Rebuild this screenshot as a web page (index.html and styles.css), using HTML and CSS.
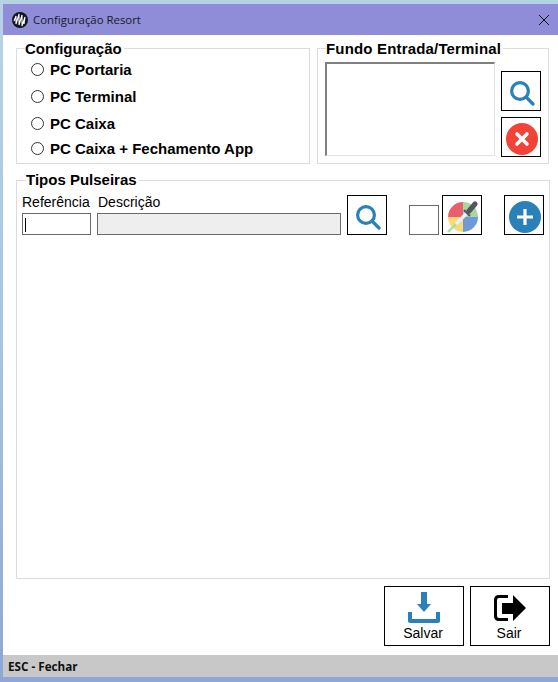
FILE: index.html
```html
<!DOCTYPE html>
<html lang="pt">
<head>
    <meta charset="UTF-8">
    <title>Configuração Resort</title>
    <link rel="stylesheet" href="styles.css">
</head>
<body>
<div class="window">
    <div class="titlebar">
        <svg class="logo" width="16" height="16" viewBox="0 0 16 16">
            <circle cx="8" cy="8" r="8" fill="#15151f"/>
            <path d="M2 9 4 4 4 12 7 2 7 13 10 3 10 14 13 5 12 12" fill="none" stroke="#fff" stroke-width="1.1"/>
        </svg>
        <span class="title">Configuração Resort</span>
        <svg class="close" width="10" height="10" viewBox="0 0 10 10">
            <path d="M0 0 10 10M10 0 0 10" stroke="#111" stroke-width="1" fill="none"/>
        </svg>
    </div>

    <div class="main">
        <div class="top-row">
            <fieldset class="group config">
                <legend>Configuração</legend>
                <label class="radio r1"><input type="radio" name="pc"> PC Portaria</label>
                <label class="radio r2"><input type="radio" name="pc"> PC Terminal</label>
                <label class="radio r3"><input type="radio" name="pc"> PC Caixa</label>
                <label class="radio r4"><input type="radio" name="pc"> PC Caixa + Fechamento App</label>
            </fieldset>

            <fieldset class="group fundo">
                <legend>Fundo Entrada/Terminal</legend>
                <div class="fundo-body">
                    <div class="picture"></div>
                    <div class="fundo-btns">
                        <button class="icon-btn" type="button">
                            <svg width="25" height="25" viewBox="0 0 25 25"><circle cx="10" cy="10" r="8.4" fill="none" stroke="#2a80b9" stroke-width="3.2"/><path d="M16.5 16.5 23 23" stroke="#2a80b9" stroke-width="3.2" stroke-linecap="round"/></svg>
                        </button>
                        <button class="icon-btn" type="button">
                            <svg width="32" height="32" viewBox="0 0 32 32"><circle cx="16" cy="16" r="16" fill="#f44336"/><path d="M11 11 21 21M21 11 11 21" stroke="#fff" stroke-width="3.6" stroke-linecap="round"/></svg>
                        </button>
                    </div>
                </div>
            </fieldset>
        </div>

        <fieldset class="group tipos">
            <legend>Tipos Pulseiras</legend>
            <div class="tipos-row">
                <div class="field">
                    <label class="field-label" for="ref">Referência</label>
                    <input id="ref" class="text ref">
                    <span class="caret"></span>
                </div>
                <div class="field">
                    <label class="field-label desc-label" for="desc">Descrição</label>
                    <input id="desc" class="text desc" disabled>
                </div>
                <button class="icon-btn search" type="button">
                    <svg width="25" height="25" viewBox="0 0 25 25"><circle cx="10" cy="10" r="8.4" fill="none" stroke="#2a80b9" stroke-width="3.2"/><path d="M16.5 16.5 23 23" stroke="#2a80b9" stroke-width="3.2" stroke-linecap="round"/></svg>
                </button>
                <div class="swatch"></div>
                <button class="icon-btn picker" type="button">
                    <svg width="32" height="32" viewBox="0 0 32 32">
                        <path d="M16 16V1A15 15 0 0 0 1 16Z" fill="#ea5f6e"/>
                        <path d="M16 16V1A15 15 0 0 1 31 16Z" fill="#a5d9a0"/>
                        <path d="M16 16H1A15 15 0 0 0 16 31Z" fill="#fbd977"/>
                        <path d="M16 16H31A15 15 0 0 1 16 31Z" fill="#6e9bd8"/>
                        <path d="M1 31 11 21" stroke="#a5e0a8" stroke-width="2.4"/>
                        <path d="M9 23 20 12" stroke="#e8f0f8" stroke-width="3.4"/>
                        <path d="M17 9 23 15" stroke="#555560" stroke-width="2"/>
                        <path d="M22 10 28 3" stroke="#555560" stroke-width="5" stroke-linecap="round"/>
                    </svg>
                </button>
                <button class="icon-btn plus" type="button">
                    <svg width="32" height="32" viewBox="0 0 32 32"><circle cx="16" cy="16" r="16" fill="#2a80b9"/><path d="M16 8V24M8 16H24" stroke="#fff" stroke-width="3.2"/></svg>
                </button>
            </div>
        </fieldset>

        <div class="actions">
            <button class="action-btn" type="button">
                <svg width="32" height="32" viewBox="0 0 32 32"><path d="M13 0H19V12H23L16 20 9 12H13Z" fill="#2a80b9"/><path d="M2 20V29H30V20" fill="none" stroke="#2a80b9" stroke-width="4" stroke-linejoin="round"/></svg>
                <span>Salvar</span>
            </button>
            <button class="action-btn" type="button">
                <svg width="32" height="32" viewBox="0 0 32 32"><path d="M14 4.500H5Q1.500 4.500 1.500 8V24Q1.500 27.500 5 27.500H14" fill="none" stroke="#000" stroke-width="3"/><path d="M8 11H19V3L32 16 19 29V22H8Z" fill="#000"/></svg>
                <span>Sair</span>
            </button>
        </div>
    </div>

    <div class="statusbar">ESC - Fechar</div>
</div>
</body>
</html>
```

FILE: styles.css
```css
html, body {
    height: 100%;
}

body {
    margin: 0;
    background: linear-gradient(#b6d3e6, #a9c4de 50%, #8ea6d8);
    font-family: "Liberation Sans", Arial, sans-serif;
    font-size: 14px;
    color: #000;
}

.window {
    box-sizing: border-box;
    height: 673px;
    margin-left: 3px;
    position: relative;
    top: 4px;
    background: #fff;
    display: flex;
    flex-direction: column;
}

.titlebar {
    height: 31px;
    flex: none;
    background: #8f8cd8;
    display: flex;
    align-items: center;
    padding: 0 9px;
}

.logo {
    margin-right: 5px;
}

.title {
    flex: 1;
    font-family: "Open Sans", sans-serif;
    font-size: 11.4px;
    color: #1a1a2a;
}

.main {
    flex: 1;
    display: flex;
    flex-direction: column;
    padding: 5px 8px 0 13px;
}

.top-row {
    display: flex;
    gap: 7px;
}

.group {
    margin: 0;
    min-width: 0;
    border: 1px solid #dcdcdc;
    padding: 0;
    box-sizing: border-box;
}

.group legend {
    font-weight: bold;
    font-size: 15px;
    line-height: 14px;
    padding: 2px 2px 0 0;
    margin-left: 8px;
}

.config {
    width: 294px;
    height: 124px;
}

.radio {
    display: flex;
    align-items: center;
    height: 14px;
    margin-left: 14px;
    font-weight: bold;
    font-size: 15px;
}

.radio input {
    appearance: none;
    width: 13px;
    height: 13px;
    margin: 0 6px 0 0;
    border: 1px solid #333;
    border-radius: 50%;
    background: #fff;
}

.r1 { margin-top: 6px; }
.r2 { margin-top: 13px; }
.r3 { margin-top: 13px; }
.r4 { margin-top: 11px; }

.fundo {
    width: 232px;
    height: 124px;
}

.fundo legend {
    letter-spacing: 0.17px;
}

.fundo-body {
    display: flex;
    gap: 6px;
    margin-left: 7px;
    padding-top: 6px;
}

.picture {
    box-sizing: border-box;
    width: 170px;
    height: 94px;
    border: 1px solid #e3e3e3;
    border-top: 2px solid #808080;
    border-left: 2px solid #808080;
}

.fundo-btns {
    display: flex;
    flex-direction: column;
    gap: 6px;
    margin-top: 9px;
}

.icon-btn {
    box-sizing: border-box;
    width: 40px;
    height: 40px;
    flex: none;
    padding: 4px 0 0 2px;
    border: 1px solid #000;
    background: #fff;
    display: flex;
    align-items: center;
    justify-content: center;
}

.tipos {
    width: 534px;
    height: 406px;
    margin-top: 9px;
}

.group.tipos legend {
    margin-left: 9px;
    padding-top: 0;
}

.tipos-row {
    display: flex;
    align-items: flex-end;
    margin-left: 5px;
    padding-top: 8px;
}

.field {
    display: flex;
    flex-direction: column;
    margin-right: 6px;
    position: relative;
}

.field-label {
    line-height: 15px;
    margin-bottom: 3px;
}

.desc-label {
    margin-left: 1px;
}

.text {
    box-sizing: border-box;
    height: 22px;
    padding: 0 1px;
    border: 1px solid #6b6b6b;
    border-radius: 0;
    outline: none;
    font: inherit;
}

.caret {
    position: absolute;
    left: 3px;
    bottom: 3px;
    width: 1px;
    height: 14px;
    background: #000;
}

.ref {
    width: 69px;
}

.desc {
    width: 244px;
    background: #eeeeee;
}

.swatch {
    box-sizing: border-box;
    width: 30px;
    height: 30px;
    margin: 0 3px 0 22px;
    border: 1px solid #6b6b6b;
}

.plus {
    margin-left: 22px;
}

.actions {
    display: flex;
    justify-content: flex-end;
    gap: 6px;
    margin-top: 7px;
}

.action-btn {
    box-sizing: border-box;
    width: 80px;
    height: 60px;
    padding: 5px 0 0;
    border: 1px solid #000;
    background: #fff;
    font: inherit;
    display: flex;
    flex-direction: column;
    align-items: center;
}

.action-btn span {
    line-height: 15px;
    margin: 2px 2px 0 0;
}

.statusbar {
    height: 22px;
    flex: none;
    margin-top: auto;
    background: #c8c8c8;
    font-family: "Open Sans", sans-serif;
    font-weight: bold;
    font-size: 11.7px;
    line-height: 23px;
    padding-left: 5px;
    color: #111;
}
```
